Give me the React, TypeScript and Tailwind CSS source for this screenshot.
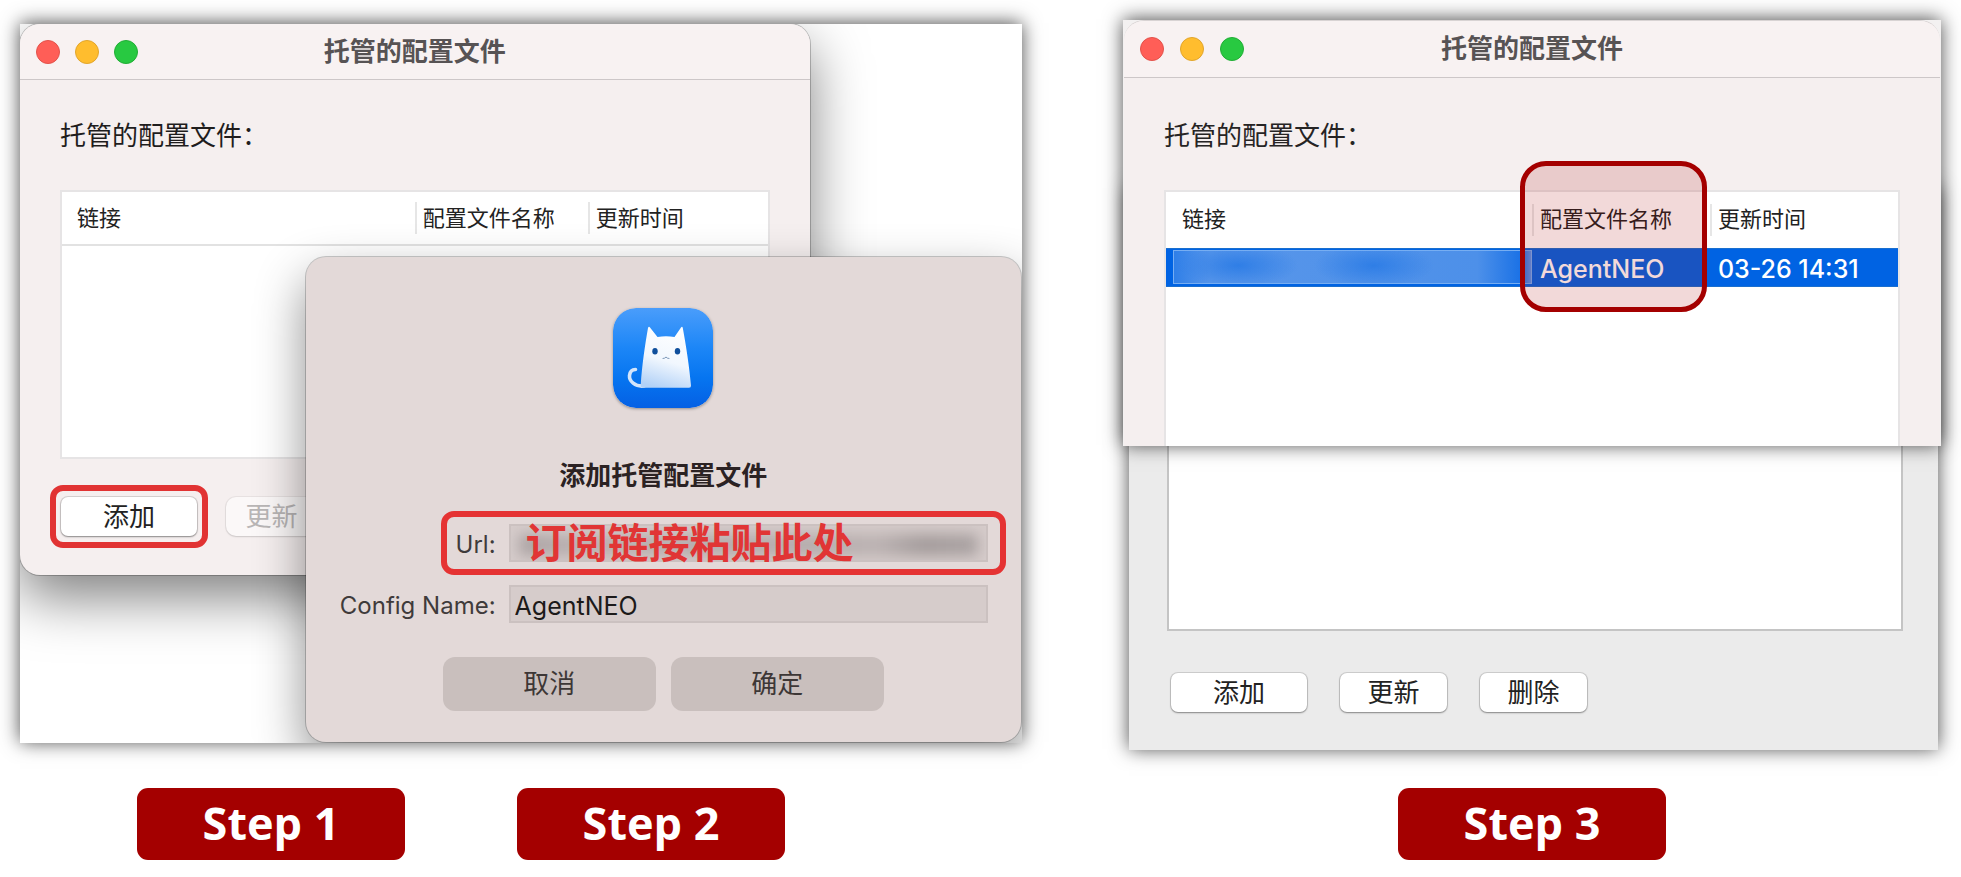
import type { ReactNode } from "react";

const FRAME = "shadow-[0_-1px_18px_rgba(0,0,0,0.7)]";

function TitleBar({ tall }: { tall?: boolean }) {
  return (
    <header
      className={`grid shrink-0 grid-cols-[1fr_auto_1fr] items-center border-b border-[#cdc7c8] bg-[#f8f2f2] px-4 ${
        tall ? "h-[57px]" : "h-14"
      }`}
    >
      <div className={tall ? "flex gap-4" : "flex gap-[15px]"}>
        <button aria-label="Close" className="size-6 rounded-full border border-[#e2524b] bg-[#ff5e57]" />
        <button aria-label="Minimize" className="size-6 rounded-full border border-[#e1a52c] bg-[#ffbd2e]" />
        <button aria-label="Zoom" className="size-6 rounded-full border border-[#22ad36] bg-[#28c941]" />
      </div>
      <h1 className="text-[26px] leading-9 font-bold text-[#575354]">托管的配置文件</h1>
    </header>
  );
}

function ColumnHead({ children }: { children: ReactNode }) {
  return <div className="flex h-8 items-center border-l-2 border-[#e6e6e6] pl-[6px]">{children}</div>;
}

function StepLabel({ children }: { children: ReactNode }) {
  return (
    <h2 className="flex h-[72px] w-[268px] items-center justify-center rounded-[11px] bg-[#a40000] pb-1 font-['Open_Sans','Noto_Sans',sans-serif] text-[45px] leading-none font-bold text-white">
      {children}
    </h2>
  );
}

function PushButton({ children, wide }: { children: ReactNode; wide?: boolean }) {
  return (
    <button
      className={`h-[39px] rounded-[7px] bg-white text-[26px] leading-none text-[#222] shadow-[0_0_0_1px_rgba(0,0,0,0.12),0_1px_2px_rgba(0,0,0,0.35)] ${
        wide ? "w-[136px]" : "w-[107px]"
      }`}
    >
      {children}
    </button>
  );
}

function CatIcon() {
  return (
    <svg viewBox="0 0 100 100" className="size-[100px] rounded-[23px] shadow-[0_1px_3px_rgba(0,0,0,0.35)]" aria-hidden="true">
      <defs>
        <linearGradient id="tile" x1="0" y1="0" x2="0" y2="1">
          <stop offset="0" stopColor="#4a9dfb" />
          <stop offset="0.4" stopColor="#1c86f7" />
          <stop offset="0.7" stopColor="#0675f0" />
          <stop offset="1" stopColor="#0560e4" />
        </linearGradient>
        <linearGradient id="fur" x1="0.6" y1="0" x2="0.35" y2="1">
          <stop offset="0" stopColor="#ffffff" />
          <stop offset="0.55" stopColor="#f1f7fe" />
          <stop offset="1" stopColor="#b3d2f7" />
        </linearGradient>
      </defs>
      <rect width="100" height="100" rx="23" fill="url(#tile)" />
      <path d="M31 78 C22 79 16 73 16.500 67.500 C17 63 19.500 61.500 22.500 61.500" fill="none" stroke="#d3e5fb" strokeWidth="3.600" strokeLinecap="round" />
      <path
        d="M35 20 Q35.800 18 37 19.500 L44.500 29 Q53 27.300 61.500 29 L68 19.500 Q69.300 18 69.800 20 C73 37 76.500 60 78 77.500 Q78.200 79.700 76 79.700 L30 79.700 Q27.500 79.700 27.700 77.500 C29 57 32 37 35 20 Z"
        fill="url(#fur)"
      />
      <ellipse cx="42" cy="43.200" rx="2.700" ry="3.200" fill="#0f4f9c" />
      <ellipse cx="64.500" cy="43.200" rx="2.700" ry="3.200" fill="#0f4f9c" />
      <path d="M50 50.500 Q52 50.500 53 49 Q54 50.500 56 50.500" fill="none" stroke="#7c97b8" strokeWidth="1" strokeLinecap="round" />
    </svg>
  );
}

function EmptyListWindow() {
  return (
    <section className="col-start-1 row-start-1 w-[78.8%] self-start overflow-hidden rounded-[20px] bg-[#f5efef] shadow-[0_0_0_1px_rgba(0,0,0,0.22),0_22px_55px_rgba(0,0,0,0.5)]">
      <TitleBar />
      <div className="px-10 pt-[38px] pb-[39px]">
        <p className="text-[26px] leading-9 text-[#1f1d1d]">托管的配置文件：</p>
        <div className="mt-9 h-[269px] border-2 border-[#e6e4e5] bg-white">
          <table className="w-full table-fixed border-b-2 border-[#e2e2e2] text-left text-[22px] text-[#222]">
            <colgroup>
              <col className="w-[50%]" />
              <col className="w-[24.5%]" />
              <col />
            </colgroup>
            <thead>
              <tr className="h-[53px]">
                <th className="pl-[15px] font-normal">链接</th>
                <th className="font-normal"><ColumnHead>配置文件名称</ColumnHead></th>
                <th className="font-normal"><ColumnHead>更新时间</ColumnHead></th>
              </tr>
            </thead>
          </table>
        </div>
        <div className="mt-[38px] flex gap-[29px] pl-px">
          <div className="relative flex">
            <PushButton wide>添加</PushButton>
            <span className="pointer-events-none absolute -inset-x-[11px] -inset-y-3 rounded-[13px] border-6 border-[#e13333]" />
          </div>
          <button disabled className="h-[39px] w-[107px] rounded-[10px] bg-[#fbf8f8] pr-4 text-[26px] leading-none text-[#b9b6b6] shadow-[0_0_0_1px_rgba(0,0,0,0.05),0_1px_2px_rgba(0,0,0,0.12)]">
            更新
          </button>
        </div>
      </div>
    </section>
  );
}

function AddConfigDialog() {
  const field = "h-[38px] w-full border-2 border-[#cbc1c0] bg-[#d6cccb] px-1 pt-1 text-[25px] text-[#1c1a1a] outline-none";
  const label = "w-[203px] shrink-0 pt-1 pr-[13px] text-right text-[24px] leading-none text-[#3f3b3b]";
  return (
    <section
      role="dialog"
      aria-label="添加托管配置文件"
      className="relative col-start-1 row-start-1 mt-[233px] mr-px mb-px flex w-[71.4%] flex-col items-center justify-self-end rounded-[20px] bg-[#e3d9d8] pt-[51px] pb-[31px] shadow-[0_0_0_1px_rgba(0,0,0,0.2),0_22px_50px_rgba(0,0,0,0.45)]"
    >
      <CatIcon />
      <h2 className="mt-[50px] text-[26px] leading-9 font-bold text-[#2b2223]">添加托管配置文件</h2>
      <div className="relative mt-[30px] flex w-full items-center pr-[33px]">
        <label htmlFor="url" className={label}>Url:</label>
        <div className="relative flex h-[38px] flex-1 items-center">
          <input id="url" type="text" className={field} />
          <span className="pointer-events-none absolute inset-0.5 overflow-hidden">
            <span className="absolute inset-x-2 top-2 bottom-1 bg-[linear-gradient(90deg,#aaa2a2,#b9b0b0_12%,#b5acac_40%,#b5acac_65%,#bbb2b2_78%,#a49c9c_88%,#aaa2a2)] blur-[7px]" />
          </span>
          <span className="pointer-events-none absolute left-[17px] text-[41px] leading-none font-bold whitespace-nowrap text-[#e13535]">
            订阅链接粘贴此处
          </span>
        </div>
        <span className="pointer-events-none absolute -inset-y-[13px] right-[15px] left-[135px] rounded-[13px] border-6 border-[#e53333]" />
      </div>
      <div className="mt-[23px] flex w-full items-center pr-[33px]">
        <label htmlFor="config-name" className={label}>Config Name:</label>
        <input id="config-name" type="text" defaultValue="AgentNEO" className={field} />
      </div>
      <div className="mt-[34px] flex gap-[15px] text-[26px] leading-none text-[#3d3736]">
        <button className="h-[54px] w-[213px] rounded-[12px] bg-[#c9bfbd]">取消</button>
        <button className="h-[54px] w-[213px] rounded-[12px] bg-[#c9bfbd]">确定</button>
      </div>
    </section>
  );
}

function FilledListWindow() {
  return (
    <div>
      <section className={`relative z-10 bg-[#f3f1f1] ${FRAME}`}>
        <div className="mx-px overflow-hidden rounded-t-[20px] border-t border-[#d8d3d3] bg-[#f5efef]">
          <TitleBar tall />
          <div className="px-10 pt-10">
            <p className="text-[26px] leading-9 text-[#262424]">托管的配置文件：</p>
            <div className="mt-9 h-64 border-2 border-b-0 border-[#e6e4e5] bg-white">
              <table className="w-full table-fixed text-left text-[22px] text-[#222]">
                <colgroup>
                  <col className="w-[50%]" />
                  <col className="w-[24.3%]" />
                  <col />
                </colgroup>
                <thead>
                  <tr className="h-[56px]">
                    <th className="pl-4 font-normal">链接</th>
                    <th className="relative font-normal">
                      <ColumnHead>配置文件名称</ColumnHead>
                      <span className="pointer-events-none absolute -top-[31px] right-[3px] -left-3 z-10 h-[151px] rounded-[26px] border-5 border-[#a40000] bg-[#a40000]/15" />
                    </th>
                    <th className="font-normal"><ColumnHead>更新时间</ColumnHead></th>
                  </tr>
                </thead>
                <tbody>
                  <tr className="h-[38px] border-y border-[#1a6fcf] bg-[#0063e3] text-[25px] leading-none font-medium text-white">
                    <td className="pl-[7px]">
                      <div className="h-[34px] border border-[#77aef2] bg-[radial-gradient(60px_22px_at_18%_45%,#2f7ee6,transparent),radial-gradient(60px_22px_at_56%_45%,#2f7ee6,transparent),linear-gradient(90deg,#2f7fe8,#5896ea_10%,#4d90e9_85%,#1b72e6_97%,#5a95ea)]" />
                    </td>
                    <td className="pt-1 pl-2">AgentNEO</td>
                    <td className="pt-1 pl-2">03-26 14:31</td>
                  </tr>
                </tbody>
              </table>
            </div>
          </div>
        </div>
      </section>
      <section className={`-mt-[257px] mr-[3px] ml-[6px] bg-[#ebebeb] pt-[257px] pr-[35px] pb-[38px] pl-[38px] ${FRAME}`}>
        <div className="h-[185px] border-x-2 border-b-2 border-[#c4c4c4] bg-white" />
        <div className="mt-[42px] flex gap-[33px] pl-1">
          <PushButton wide>添加</PushButton>
          <PushButton>更新</PushButton>
          <PushButton>删除</PushButton>
        </div>
      </section>
    </div>
  );
}

export default function App() {
  return (
    <main className="grid min-h-screen grid-cols-[1002fr_818fr] items-start gap-x-[101px] bg-white px-5 pb-4 font-['Inter','Noto_Sans_CJK_SC',sans-serif]">
      <div className="pt-6">
        <div className={FRAME}>
          <div className="grid overflow-hidden bg-white">
            <EmptyListWindow />
            <AddConfigDialog />
          </div>
        </div>
        <div className="mt-[45px] flex gap-28 pl-[117px]">
          <StepLabel>Step 1</StepLabel>
          <StepLabel>Step 2</StepLabel>
        </div>
      </div>
      <div className="pt-5">
        <FilledListWindow />
        <div className="mt-[38px] flex justify-center">
          <StepLabel>Step 3</StepLabel>
        </div>
      </div>
    </main>
  );
}
